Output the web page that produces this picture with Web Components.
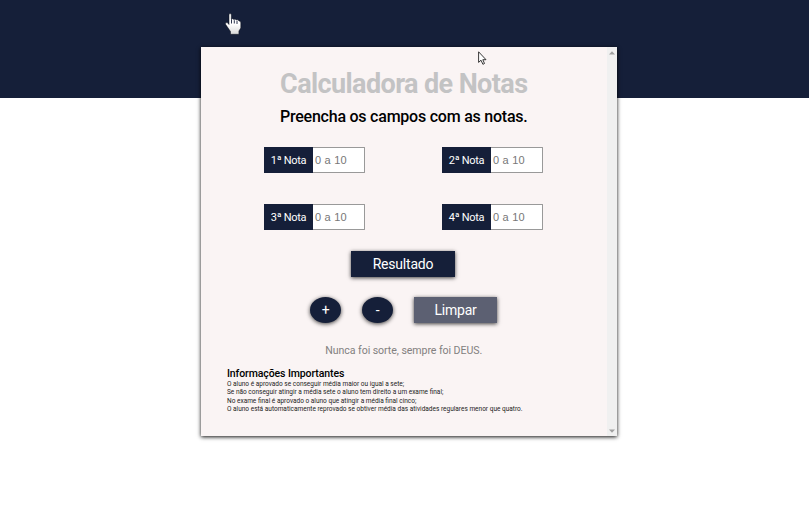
<!DOCTYPE html>
<html lang="pt-BR">
<head>
<meta charset="utf-8">
<title>Calculadora de Notas</title>
<style>
html,body{margin:0;height:100%;overflow:hidden;background:#fff;font-family:Roboto,"Liberation Sans",sans-serif;--navy:#151f39}
</style>
</head>
<body>
<grade-page></grade-page>
<script>
const define = (name, html) => customElements.define(name, class extends HTMLElement {
  constructor() {
    super();
    this.attachShadow({mode: "open"}).innerHTML = html;
  }
});

define("page-banner", `<style>:host{display:block;height:98.4px;background:var(--navy)}</style>`);

define("scroll-rail", `<style>
:host{display:flex;flex-direction:column;justify-content:space-between;align-items:center;width:10px;background:#f0f0f0;padding:4px 0 3px;box-sizing:border-box}
svg{display:block}
</style>
<svg width="6" height="4"><path d="M0 3.5L3 .3L6 3.5Z" fill="#a0a0a0"/></svg>
<svg width="6" height="4"><path d="M0 .5L3 3.7L6 .5Z" fill="#a0a0a0"/></svg>`);

define("card-heading", `<style>
:host{display:block;text-align:center;white-space:nowrap}
h1{margin:0;font-size:27px;line-height:32px;font-weight:700;color:#c3c3c4;letter-spacing:-.6px}
h2{margin:7px 0 0;font-size:16px;line-height:20px;font-weight:500;color:#000;letter-spacing:-.23px}
</style><h1><slot name="title"></slot></h1><h2><slot name="sub"></slot></h2>`);

define("grade-field", `<style>
:host{display:flex;width:101px;height:26px;box-sizing:border-box}
span{display:flex;align-items:center;justify-content:center;width:49px;background:var(--navy);color:#fff;font-size:11px;letter-spacing:-.3px;white-space:nowrap}
div{flex:1;display:flex;align-items:center;box-sizing:border-box;border:1px solid #999;border-left:0;border-radius:0 1px 1px 0;background:#fff;color:#777;font:11px "Liberation Sans",sans-serif;padding-left:2px;letter-spacing:.2px}
</style><span><slot></slot></span><div>0 a 10</div>`);

define("action-button", `<style>
:host{display:flex;align-items:center;justify-content:center;box-sizing:border-box;width:104px;height:26px;background:var(--navy);color:#fff;font-size:14px;letter-spacing:-.2px;box-shadow:0 1px 4px rgba(0,0,0,.75)}
:host([kind=round]){width:31px;border-radius:50%}
:host([kind=muted]){width:83px;background:#5c6072}
</style><slot></slot>`);

define("info-notes", `<style>
:host{display:block;color:#222;font-size:6.5px;line-height:8.4px;white-space:nowrap}
h3{margin:0 0 1px;font-size:10.5px;line-height:11px;font-weight:500;letter-spacing:-.1px;color:#000}
</style><h3><slot name="title"></slot></h3><slot></slot>`);

define("grade-card", `<style>
:host{display:flex;width:415.5px;height:389px;background:#faf4f4;box-shadow:0 1px 4px rgba(0,0,0,.95)}
main{flex:1;padding-top:21px;box-sizing:border-box}
.grid{display:grid;grid-template-columns:101px 101px;column-gap:77px;row-gap:31px;margin:20px 0 0 63px}
.primary{display:flex;margin:21px 0 0 150px}
.row{display:flex;gap:21px;margin:20px 0 0 109px}
p{margin:21px 0 0;text-align:center;font-size:10.6px;line-height:14px;letter-spacing:-.07px;color:#828080}
info-notes{margin:10px 0 0 26px}
.info-line{display:block}
</style>
<main>
<card-heading><span slot="title">Calculadora de Notas</span><span slot="sub">Preencha os campos com as notas.</span></card-heading>
<div class="grid"><grade-field>1ª Nota</grade-field><grade-field>2ª Nota</grade-field><grade-field>3ª Nota</grade-field><grade-field>4ª Nota</grade-field></div>
<div class="primary"><action-button>Resultado</action-button></div>
<div class="row"><action-button kind="round">+</action-button><action-button kind="round">-</action-button><action-button kind="muted">Limpar</action-button></div>
<p>Nunca foi sorte, sempre foi DEUS.</p>
<info-notes><span slot="title">Informações Importantes</span><span class="info-line">O aluno é aprovado se conseguir média maior ou igual a sete;</span><span class="info-line">Se não conseguir atingir a média sete o aluno tem direito a um exame final;</span><span class="info-line">No exame final é aprovado o aluno que atingir a média final cinco;</span><span class="info-line">O aluno está automaticamente reprovado se obtiver média das atividades regulares menor que quatro.</span></info-notes>
</main>
<scroll-rail></scroll-rail>`);

define("mouse-pointer", `<style>:host{display:block;position:absolute}svg{display:block}</style>
<svg width="9" height="15" viewBox="0 0 9 15"><path d="M.6 .8V11.4L3 9.2L4.9 13.3L6.5 12.5L4.8 8.7H8Z" fill="#fff" stroke="#222" stroke-width=".9"/></svg>`);

define("hand-pointer", `<style>:host{display:block;position:absolute}svg{display:block}</style>
<svg width="17" height="22" viewBox="0 0 17 22"><defs><linearGradient id="g" x2="0" y2="1"><stop offset=".5" stop-color="#fff"/><stop offset="1" stop-color="#d8d8d8"/></linearGradient></defs><path d="M4 1.2Q5 0 6.3 1.2V6.2Q7.7 5.2 8.8 6.5Q10.3 5.6 11.5 7Q13.2 6.4 14 8Q15.8 7.8 15.8 9.8V15L13.9 18V21.3H5.5V18.5L.7 11.6Q-.3 9.2 2.2 9.5L4 11.5Z" fill="url(#g)" stroke="#080c18" stroke-width=".5"/><path d="M6.5 6.3V10.5M9.3 7.2V10.5M12 8V11" stroke="#141e3a" stroke-width=".9"/></svg>`);

define("grade-page", `<style>
:host{display:block;position:relative;width:809px;height:518px;overflow:hidden}
grade-card{margin:-51.4px 0 0 201px}
mouse-pointer{left:478px;top:51px}
hand-pointer{left:225px;top:13px}
</style><page-banner></page-banner><grade-card></grade-card><hand-pointer></hand-pointer><mouse-pointer></mouse-pointer>`);
</script>
</body>
</html>
